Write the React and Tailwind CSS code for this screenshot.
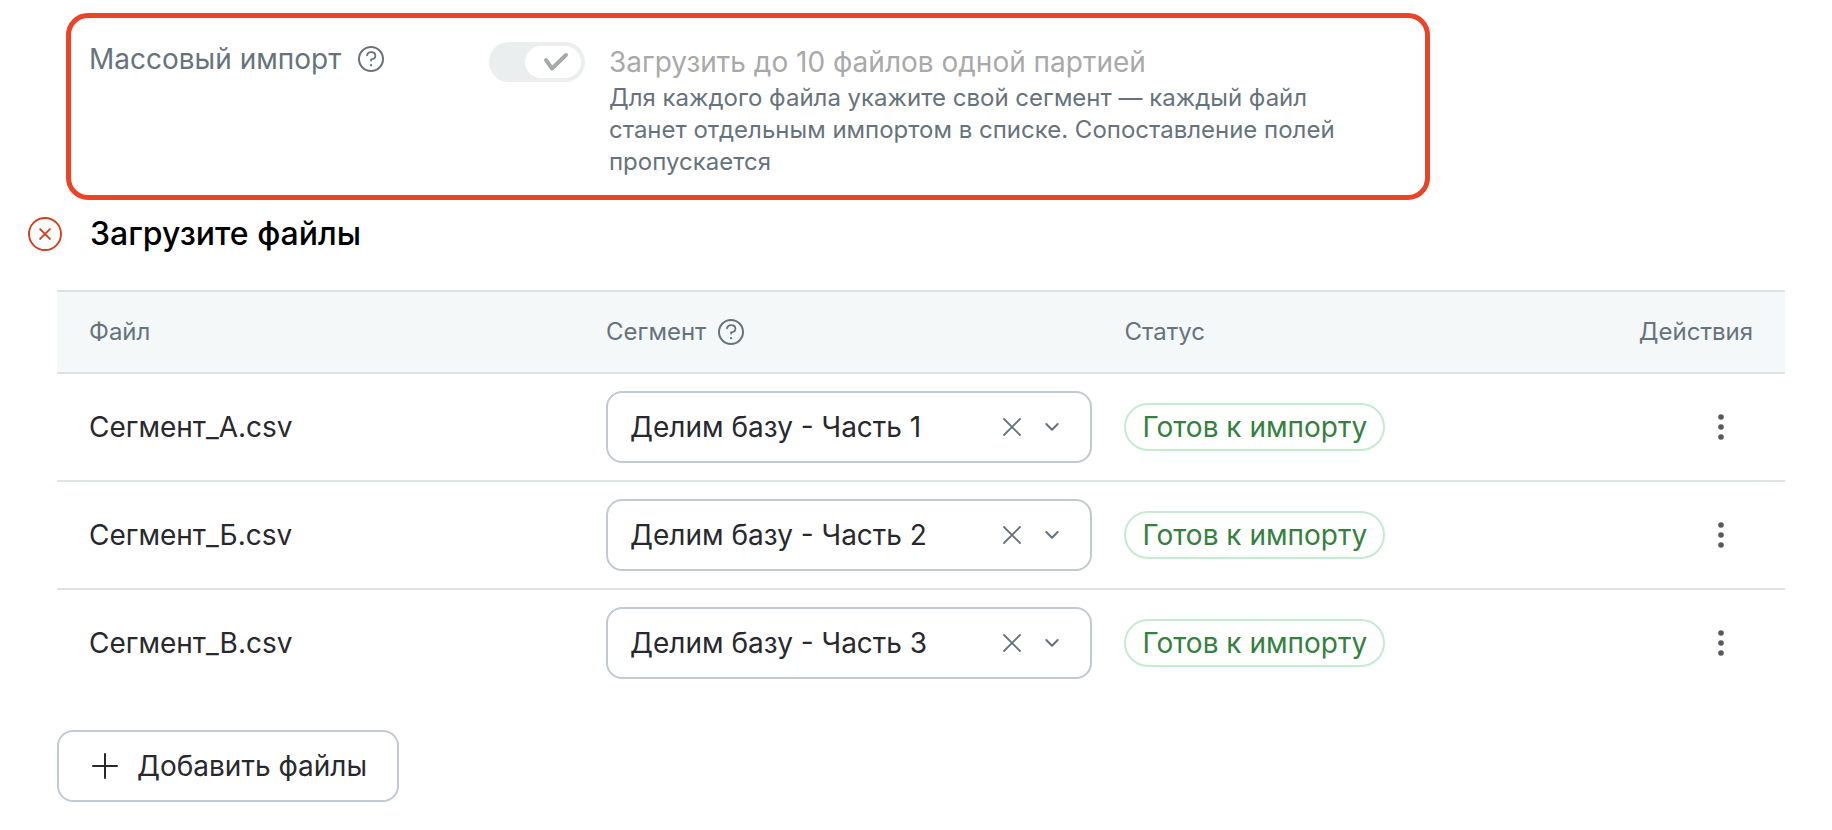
import { useState } from 'react';

const initialFiles = [
  { name: 'Сегмент_А.csv', segment: 'Делим базу - Часть 1' },
  { name: 'Сегмент_Б.csv', segment: 'Делим базу - Часть 2' },
  { name: 'Сегмент_В.csv', segment: 'Делим базу - Часть 3' },
];

const segments = ['Делим базу - Часть 1', 'Делим базу - Часть 2', 'Делим базу - Часть 3'];

function HelpButton({ label }) {
  return (
    <button type="button" aria-label={label} className="shrink-0 text-[#67737c]">
      <svg width="28" height="28" viewBox="0 0 28 28" fill="none" stroke="currentColor" strokeWidth="2" strokeLinecap="round" strokeLinejoin="round" className="block">
        <circle cx="14" cy="14" r="12" />
        <path d="M10 10.3c.4-1.9 2-3.1 4.1-3.1 2.4 0 4.3 1.4 4.3 3.5 0 2.2-1.9 3.4-4.3 3.7v1.3" strokeWidth="1.8" />
        <circle cx="14.1" cy="20.2" r="1.1" fill="currentColor" stroke="none" />
      </svg>
    </button>
  );
}

function ErrorIcon() {
  return (
    <svg width="34" height="34" viewBox="0 0 34 34" fill="none" stroke="#d23f1f" strokeWidth="1.9" strokeLinecap="round" className="shrink-0" aria-hidden="true">
      <circle cx="17" cy="17" r="16" />
      <path d="M12.1 12.1l9.8 9.8M21.9 12.1l-9.8 9.8" />
    </svg>
  );
}

function SegmentSelect({ file, value, onChange }) {
  return (
    <div className="flex h-[72px] items-center rounded-2xl border-2 border-[#bfcad3] bg-white px-[22px]">
      <select
        aria-label={`Сегмент для файла ${file}`}
        value={value}
        onChange={(e) => onChange(e.target.value)}
        className="h-full min-w-0 flex-1 appearance-none bg-transparent text-[28px] leading-10 text-[#28282f] outline-none"
      >
        <option value="" />
        {segments.map((s) => (
          <option key={s} value={s}>{s}</option>
        ))}
      </select>
      <button type="button" aria-label="Очистить" onClick={() => onChange('')} className="ml-4 shrink-0 text-[#67737c]">
        <svg width="32" height="32" viewBox="0 0 32 32" fill="none" stroke="currentColor" strokeWidth="1.8" strokeLinecap="round" className="block">
          <path d="M8 8l16 16M24 8L8 24" />
        </svg>
      </button>
      <svg width="32" height="32" viewBox="0 0 32 32" fill="none" stroke="#67737c" strokeWidth="2" strokeLinecap="round" strokeLinejoin="round" className="ml-2 shrink-0" aria-hidden="true">
        <path d="M10.3 13l5.7 5.8 5.7-5.8" />
      </svg>
    </div>
  );
}

export default function App() {
  const [files, setFiles] = useState(initialFiles);
  const setSegment = (index, segment) =>
    setFiles(files.map((f, i) => (i === index ? { ...f, segment } : f)));

  return (
    <main className="min-h-screen bg-white pb-7 pl-7 pr-[47px] pt-[13px] font-['Inter',sans-serif] text-[28px] leading-10 text-[#28282f]">
      <section className="ml-[38px] flex max-w-[1364px] items-start rounded-[22px] border-5 border-[#ec4226] pb-[17px] pl-[18px] pr-5 pt-6">
        <div className="flex w-[400px] shrink-0 items-center gap-4 leading-[34px] text-[#67737c]">
          <span>Массовый импорт</span>
          <HelpButton label="Справка о массовом импорте" />
        </div>
        <div className="flex min-w-0 flex-1 items-start gap-6">
          <label htmlFor="bulk" className="block shrink-0">
            <input id="bulk" type="checkbox" role="switch" defaultChecked disabled aria-labelledby="bulk-title" className="peer sr-only" />
            <span className="flex h-10 w-24 items-center justify-end rounded-full bg-[#eaeeef] p-1">
              <span className="flex h-8 w-14 items-center justify-center rounded-full bg-white pl-1.5">
                <svg width="28" height="24" viewBox="0 0 28 24" fill="none" stroke="#a6a8aa" strokeWidth="4" strokeLinecap="round" strokeLinejoin="round" aria-hidden="true">
                  <path d="M4 10.2l6 8.3L24 5" />
                </svg>
              </span>
            </span>
          </label>
          <div className="min-w-0 max-w-[740px]">
            <label id="bulk-title" htmlFor="bulk" className="block text-[#a9a9a9]">Загрузить до 10 файлов одной партией</label>
            <p className="text-2xl leading-8 text-[#67737c]">
              Для каждого файла укажите свой сегмент — каждый файл станет отдельным импортом в списке. Сопоставление полей пропускается
            </p>
          </div>
        </div>
      </section>

      <div className="mt-[14px] flex items-center gap-7">
        <ErrorIcon />
        <h2 className="text-[32px] font-medium leading-10 text-black">Загрузите файлы</h2>
      </div>

      <div className="ml-[29px] mt-9">
        <table className="w-full table-fixed border-separate border-spacing-0 text-left">
          <colgroup>
            <col className="w-[30.85%]" />
            <col className="w-[30%]" />
            <col />
            <col className="w-[13%]" />
          </colgroup>
          <thead>
            <tr className="bg-[#f4f8f9] text-2xl text-[#67737c] *:h-[84px] *:border-y-2 *:border-[#dae2e8] *:p-0 *:font-normal">
              <th scope="col"><div className="pl-8">Файл</div></th>
              <th scope="col">
                <div className="flex items-center gap-[11px] px-4">
                  <span>Сегмент</span>
                  <HelpButton label="Справка о сегменте" />
                </div>
              </th>
              <th scope="col"><div className="px-4">Статус</div></th>
              <th scope="col"><div className="pr-8 text-right">Действия</div></th>
            </tr>
          </thead>
          <tbody>
            {files.map((file, i) => (
              <tr key={file.name} className="*:border-b-2 *:border-[#dce2e6] *:py-[17px] last:*:border-transparent">
                <td className="pl-8">{file.name}</td>
                <td className="px-4">
                  <SegmentSelect file={file.name} value={file.segment} onChange={(v) => setSegment(i, v)} />
                </td>
                <td className="px-4">
                  <span className="inline-flex h-12 items-center whitespace-nowrap rounded-full border-2 border-[#c4ebcf] px-4 align-middle text-[#35803f]">
                    Готов к импорту
                  </span>
                </td>
                <td className="pr-12">
                  <button type="button" aria-label={`Действия с файлом ${file.name}`} className="ml-auto block">
                    <svg width="32" height="32" viewBox="0 0 32 32" fill="#55585d" className="block">
                      <circle cx="16" cy="6" r="2.8" />
                      <circle cx="16" cy="16" r="2.8" />
                      <circle cx="16" cy="26" r="2.8" />
                    </svg>
                  </button>
                </td>
              </tr>
            ))}
          </tbody>
        </table>

        <button type="button" className="mt-8 flex h-[72px] items-center gap-4 rounded-2xl border-2 border-[#bfcad3] bg-white px-[30px]">
          <svg width="32" height="32" viewBox="0 0 32 32" fill="none" stroke="currentColor" strokeWidth="2" strokeLinecap="round" aria-hidden="true">
            <path d="M16 4v24M4 16h24" />
          </svg>
          <span>Добавить файлы</span>
        </button>
      </div>
    </main>
  );
}
